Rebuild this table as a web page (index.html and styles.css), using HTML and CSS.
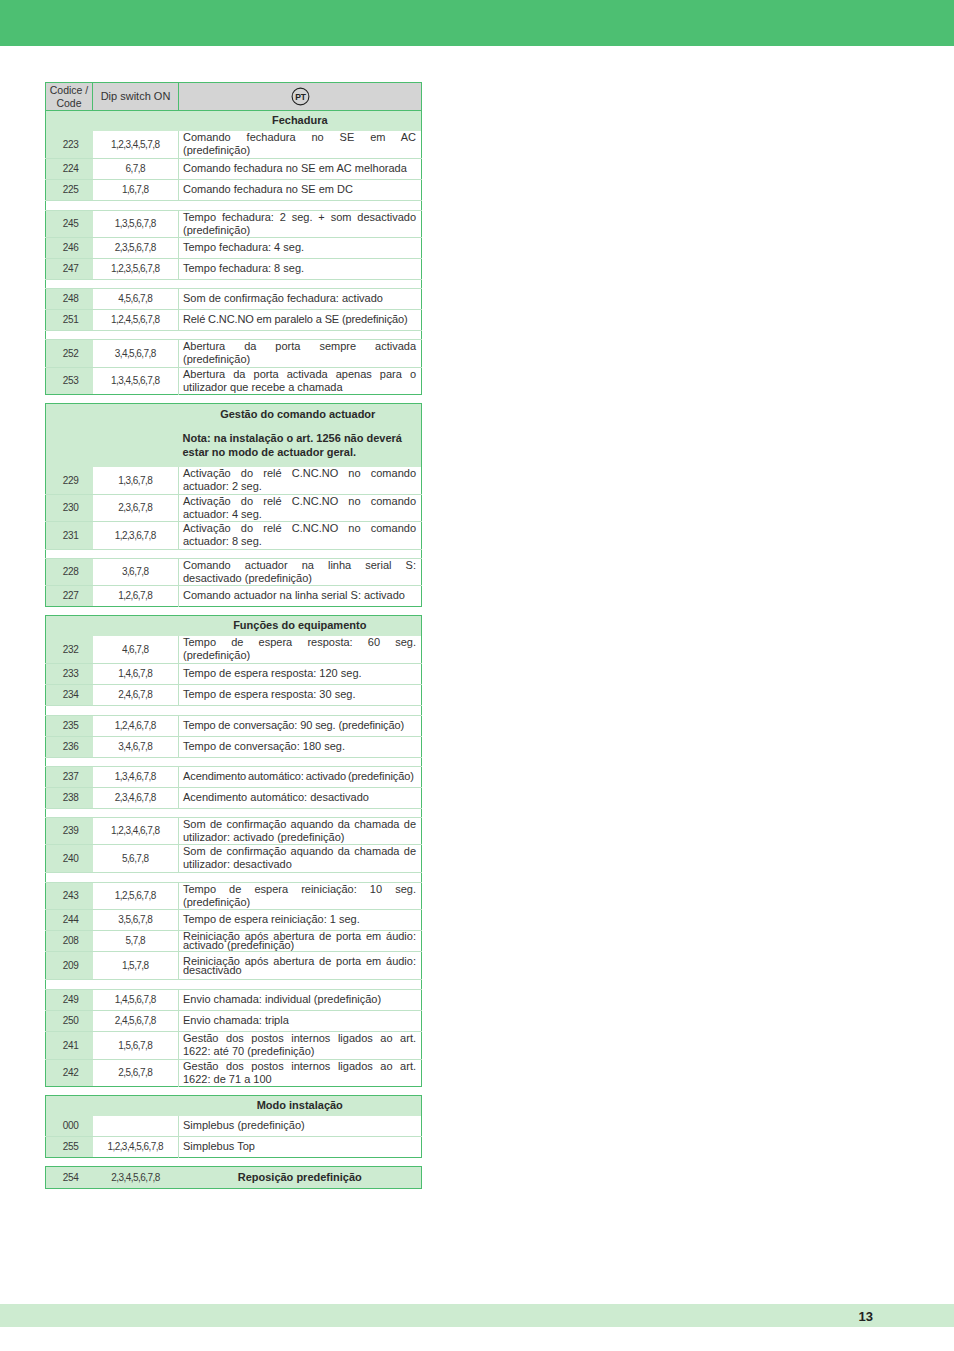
FILE: index.html
```html
<!DOCTYPE html>
<html lang="pt">
<head>
<meta charset="utf-8">
<title>Dip switch</title>
<link rel="stylesheet" href="styles.css">
</head>
<body>
<div class="page">
  <div class="topbar"></div>
  <div class="content">
    <table class="t">
      <colgroup><col class="c1"><col class="c2"><col class="c3"></colgroup>
      <tr class="head">
        <th class="hcode">Codice /<br>Code</th>
        <th class="hdip">Dip switch ON</th>
        <th class="hdesc"><svg class="pt" width="19" height="19" viewBox="0 0 19 19"><circle cx="9.5" cy="9.5" r="8.4" fill="none" stroke="#222" stroke-width="1.1"/><text x="9.6" y="12.6" text-anchor="middle" font-family="Liberation Sans, Arial, sans-serif" font-weight="bold" font-size="8.5" fill="#222">PT</text></svg></th>
      </tr>
      <tr class="sec"><td colspan="2" class="secfill"></td><td class="title">Fechadura</td></tr>
      <tr><td class="code">223</td><td class="dip">1,2,3,4,5,7,8</td><td class="desc">Comando fechadura no SE em AC (predefinição)</td></tr>
      <tr><td class="code">224</td><td class="dip">6,7,8</td><td class="desc">Comando fechadura no SE em AC melhorada</td></tr>
      <tr><td class="code">225</td><td class="dip">1,6,7,8</td><td class="desc">Comando fechadura no SE em DC</td></tr>
      <tr class="gap wide"><td colspan="3"></td></tr>
      <tr><td class="code">245</td><td class="dip">1,3,5,6,7,8</td><td class="desc">Tempo fechadura: 2 seg. + som desactivado (predefinição)</td></tr>
      <tr><td class="code">246</td><td class="dip">2,3,5,6,7,8</td><td class="desc">Tempo fechadura: 4 seg.</td></tr>
      <tr><td class="code">247</td><td class="dip">1,2,3,5,6,7,8</td><td class="desc">Tempo fechadura: 8 seg.</td></tr>
      <tr class="gap"><td colspan="3"></td></tr>
      <tr><td class="code">248</td><td class="dip">4,5,6,7,8</td><td class="desc">Som de confirmação fechadura: activado</td></tr>
      <tr><td class="code">251</td><td class="dip">1,2,4,5,6,7,8</td><td class="desc squeeze">Relé C.NC.NO em paralelo a SE (predefinição)</td></tr>
      <tr class="gap"><td colspan="3"></td></tr>
      <tr><td class="code">252</td><td class="dip">3,4,5,6,7,8</td><td class="desc">Abertura da porta sempre activada (predefinição)</td></tr>
      <tr><td class="code">253</td><td class="dip">1,3,4,5,6,7,8</td><td class="desc">Abertura da porta activada apenas para o utilizador que recebe a chamada</td></tr>
    </table>

    <table class="t">
      <colgroup><col class="c1"><col class="c2"><col class="c3"></colgroup>
      <tr class="sec"><td colspan="2" class="secfill"></td><td class="title big"><div class="tline">Gestão do comando actuador</div><div class="note">Nota: na instalação o art. 1256 não deverá estar no modo de actuador geral.</div></td></tr>
      <tr><td class="code">229</td><td class="dip">1,3,6,7,8</td><td class="desc">Activação do relé C.NC.NO no comando actuador: 2 seg.</td></tr>
      <tr><td class="code">230</td><td class="dip">2,3,6,7,8</td><td class="desc">Activação do relé C.NC.NO no comando actuador: 4 seg.</td></tr>
      <tr><td class="code">231</td><td class="dip">1,2,3,6,7,8</td><td class="desc">Activação do relé C.NC.NO no comando actuador: 8 seg.</td></tr>
      <tr class="gap"><td colspan="3"></td></tr>
      <tr><td class="code">228</td><td class="dip">3,6,7,8</td><td class="desc">Comando actuador na linha serial S: desactivado (predefinição)</td></tr>
      <tr><td class="code">227</td><td class="dip">1,2,6,7,8</td><td class="desc">Comando actuador na linha serial S: activado</td></tr>
    </table>

    <table class="t">
      <colgroup><col class="c1"><col class="c2"><col class="c3"></colgroup>
      <tr class="sec"><td colspan="2" class="secfill"></td><td class="title">Funções do equipamento</td></tr>
      <tr><td class="code">232</td><td class="dip">4,6,7,8</td><td class="desc">Tempo de espera resposta: 60 seg. (predefinição)</td></tr>
      <tr><td class="code">233</td><td class="dip">1,4,6,7,8</td><td class="desc">Tempo de espera resposta: 120 seg.</td></tr>
      <tr><td class="code">234</td><td class="dip">2,4,6,7,8</td><td class="desc">Tempo de espera resposta: 30 seg.</td></tr>
      <tr class="gap wide"><td colspan="3"></td></tr>
      <tr><td class="code">235</td><td class="dip">1,2,4,6,7,8</td><td class="desc squeeze">Tempo de conversação: 90 seg. (predefinição)</td></tr>
      <tr><td class="code">236</td><td class="dip">3,4,6,7,8</td><td class="desc">Tempo de conversação: 180 seg.</td></tr>
      <tr class="gap"><td colspan="3"></td></tr>
      <tr><td class="code">237</td><td class="dip">1,3,4,6,7,8</td><td class="desc squeeze2">Acendimento automático: activado (predefinição)</td></tr>
      <tr><td class="code">238</td><td class="dip">2,3,4,6,7,8</td><td class="desc">Acendimento automático: desactivado</td></tr>
      <tr class="gap"><td colspan="3"></td></tr>
      <tr><td class="code">239</td><td class="dip">1,2,3,4,6,7,8</td><td class="desc">Som de confirmação aquando da chamada de utilizador: activado (predefinição)</td></tr>
      <tr><td class="code">240</td><td class="dip">5,6,7,8</td><td class="desc">Som de confirmação aquando da chamada de utilizador: desactivado</td></tr>
      <tr class="gap wide"><td colspan="3"></td></tr>
      <tr><td class="code">243</td><td class="dip">1,2,5,6,7,8</td><td class="desc">Tempo de espera reiniciação: 10 seg. (predefinição)</td></tr>
      <tr><td class="code">244</td><td class="dip">3,5,6,7,8</td><td class="desc">Tempo de espera reiniciação: 1 seg.</td></tr>
      <tr class="tight"><td class="code">208</td><td class="dip">5,7,8</td><td class="desc">Reiniciação após abertura de porta em áudio: activado (predefinição)</td></tr>
      <tr class="tight tall"><td class="code">209</td><td class="dip">1,5,7,8</td><td class="desc">Reiniciação após abertura de porta em áudio: desactivado</td></tr>
      <tr class="gap wide"><td colspan="3"></td></tr>
      <tr><td class="code">249</td><td class="dip">1,4,5,6,7,8</td><td class="desc">Envio chamada: individual (predefinição)</td></tr>
      <tr><td class="code">250</td><td class="dip">2,4,5,6,7,8</td><td class="desc">Envio chamada: tripla</td></tr>
      <tr><td class="code">241</td><td class="dip">1,5,6,7,8</td><td class="desc">Gestão dos postos internos ligados ao art. 1622: até 70 (predefinição)</td></tr>
      <tr><td class="code">242</td><td class="dip">2,5,6,7,8</td><td class="desc">Gestão dos postos internos ligados ao art. 1622: de 71 a 100</td></tr>
    </table>

    <table class="t">
      <colgroup><col class="c1"><col class="c2"><col class="c3"></colgroup>
      <tr class="sec"><td colspan="2" class="secfill"></td><td class="title">Modo instalação</td></tr>
      <tr><td class="code">000</td><td class="dip"></td><td class="desc">Simplebus (predefinição)</td></tr>
      <tr><td class="code">255</td><td class="dip">1,2,3,4,5,6,7,8</td><td class="desc">Simplebus Top</td></tr>
    </table>

    <table class="t">
      <colgroup><col class="c1"><col class="c2"><col class="c3"></colgroup>
      <tr class="solo"><td class="code">254</td><td class="dip">2,3,4,5,6,7,8</td><td class="title">Reposição predefinição</td></tr>
    </table>
  </div>
  <div class="footer"><span class="pnum">13</span></div>
</div>
</body>
</html>
```

FILE: styles.css
```css
html, body {
  margin: 0;
  padding: 0;
  background: #ffffff;
}

body {
  font-family: "Liberation Sans", Arial, Helvetica, sans-serif;
  color: #333333;
}

.page {
  height: 1351px;
  display: flex;
  flex-direction: column;
}

.topbar {
  height: 46px;
  background: #4dbf72;
  flex: none;
}

.content {
  padding: 36px 0 0 45px;
  display: flex;
  flex-direction: column;
  align-items: flex-start;
  gap: 8px;
}

.t {
  border-collapse: collapse;
  table-layout: fixed;
  width: 376px;
  border: 1px solid #4cbd6f;
  font-size: 11px;
  line-height: 13.25px;
}

col.c1 { width: 47px; }
col.c2 { width: 86px; }
col.c3 { width: 243px; }

.t td, .t th {
  padding: 0;
  height: 20px;
  vertical-align: middle;
  font-weight: normal;
}

.t tr + tr td {
  border-top: 1px solid #bfe3c7;
}

/* header */
.t .head th {
  height: 27px;
  background: #d4d4d4;
  text-align: center;
  border-bottom: 1px solid #4cbd6f;
}
.t .head th + th {
  border-left: 1px solid #4cbd6f;
}
.hcode {
  font-size: 10.5px;
  line-height: 12.5px;
}
.hdip {
  font-size: 11px;
}
.pt {
  display: block;
  margin: 0 auto;
}

/* cells */
.t .code {
  background: #cdebd1;
  text-align: center;
  font-size: 10px;
  letter-spacing: -0.3px;
  padding-left: 3px;
  color: #3a3a3a;
}
.t .dip {
  text-align: center;
  font-size: 10px;
  letter-spacing: -0.55px;
  color: #3a3a3a;
}
.t .desc {
  padding: 0 5px 0 4px;
  text-align: justify;
  border-left: 1px solid #bfe3c7;
}
.t .squeeze { letter-spacing: -0.12px; }
.t .squeeze2 { word-spacing: -1px; letter-spacing: -0.1px; }

/* section titles */
.t .sec td {
  background: #cdebd1;
  height: 20px;
}
.t tr.sec + tr td {
  border-top: none;
}
.t .title {
  font-weight: bold;
  text-align: center;
  color: #2a2a2a;
}
.t .title.big {
  padding: 3px 8px 8px 4px;
  vertical-align: top;
}
.tline {
  line-height: 14px;
  text-align: center;
}
.note {
  margin-top: 10px;
  text-align: left;
  line-height: 14px;
}

/* gap rows */
.t .gap td {
  height: 8px;
  background: #ffffff;
}
.t .gap.wide td {
  height: 9px;
}

/* tight rows */
.t .tight .desc {
  line-height: 9px;
}
.t .tall td {
  height: 27px;
}

/* solo row */
.t .solo td {
  background: #cdebd1;
  height: 21px;
}

/* footer */
.footer {
  margin-top: auto;
  margin-bottom: 24px;
  height: 23px;
  flex: none;
  background: #cdebd0;
  display: flex;
  align-items: center;
  justify-content: flex-end;
  padding-right: 81px;
}
.pnum {
  font-weight: bold;
  font-size: 13px;
  color: #222222;
  position: relative;
  top: 1px;
}
```
